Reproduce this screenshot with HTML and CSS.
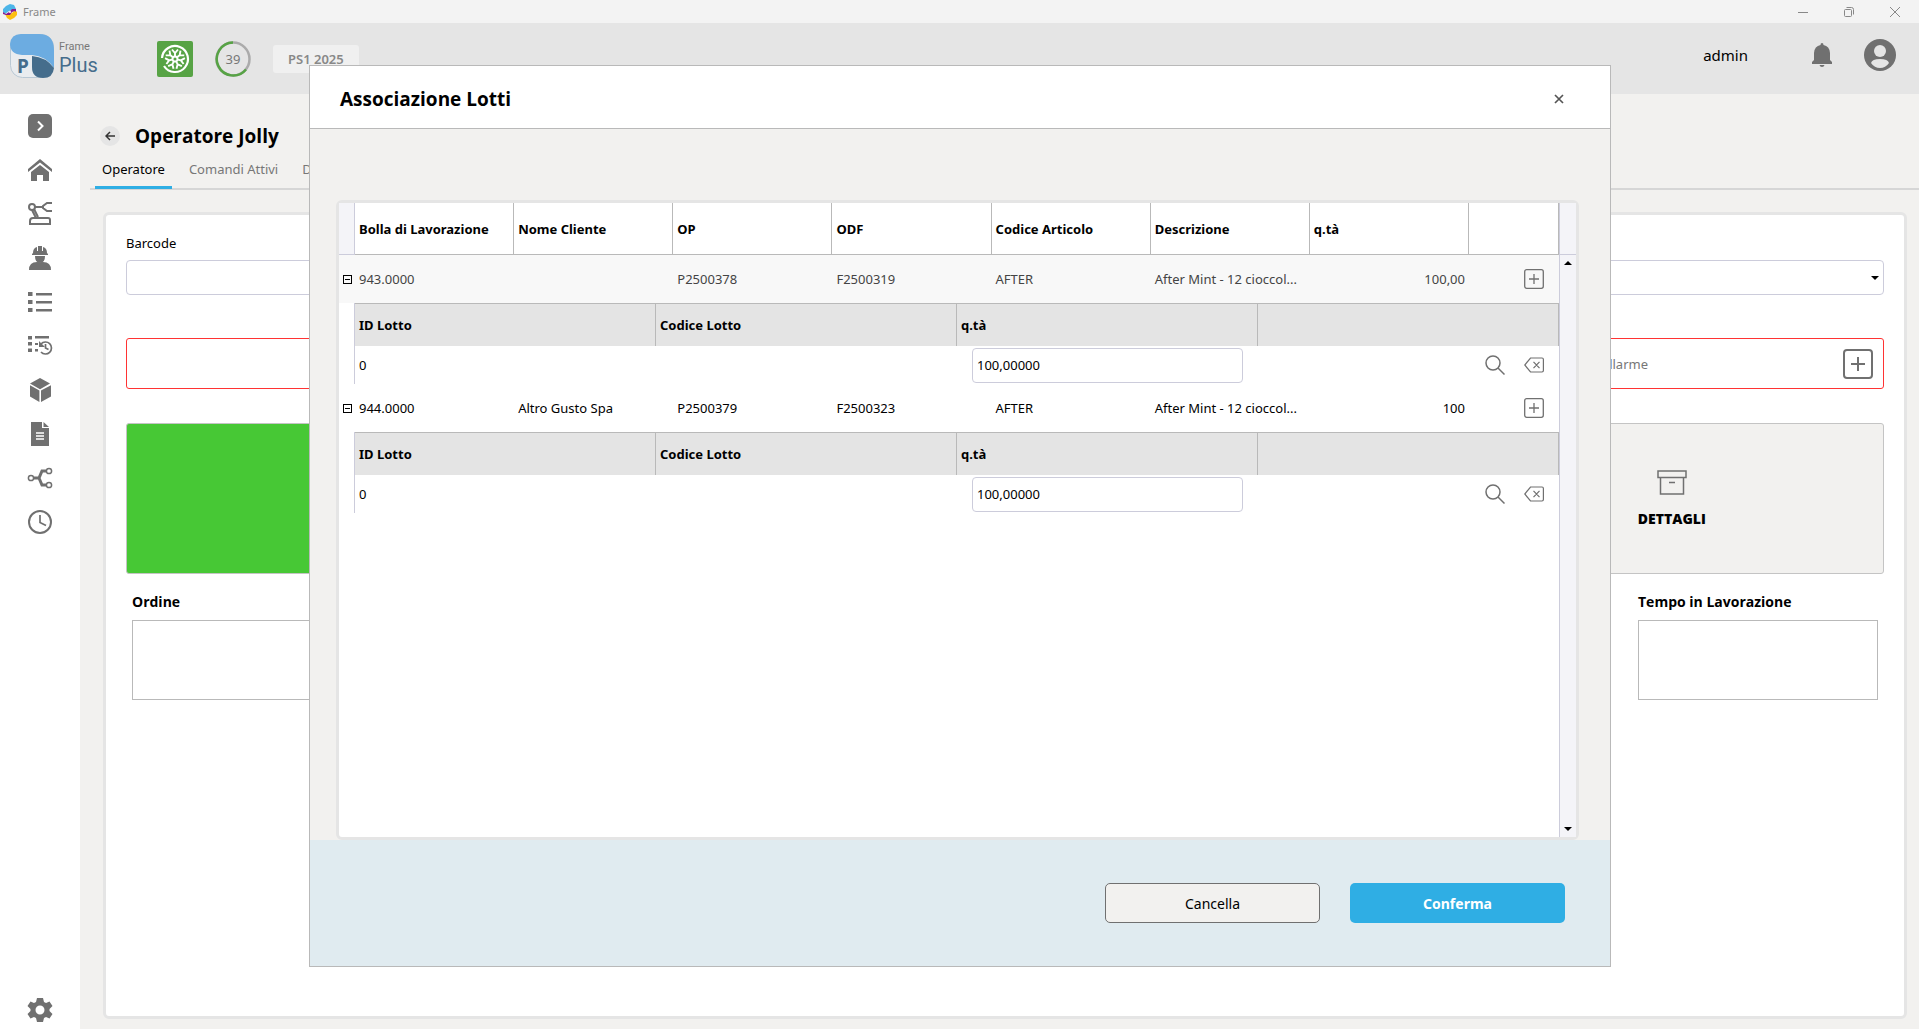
FILE: index.html
```html
<!DOCTYPE html>
<html lang="it">
<head>
    <meta charset="UTF-8">
    <meta name="viewport" content="width=device-width, initial-scale=1.0">
    <title>Frame</title>
    <link rel="stylesheet" href="styles.css">
</head>
<body>
    <div class="titlebar">
        <svg class="app-icon" width="16" height="16" viewBox="0 0 16 16">
            <path fill="#4db5e8" d="M8 0l4 1 2 4-4 1-3 1-4 3-2-2V5l3-3z"/>
            <path fill="#fdc010" d="M15 8v3l-3 3-4 2-3-2-2-4 4 0 3-1 3-3z"/>
            <path fill="#8a1b8e" d="M1 8l3 2 3-2 3-3 4 0v3l-1-1-3 1-2 3-4 0-3-1z"/>
            <circle cx="8" cy="8" r="1" fill="#fff"/>
        </svg>
        <span class="app-name">Frame</span>
        <div class="window-buttons">
            <button aria-label="Riduci"><svg width="12" height="12" viewBox="0 0 12 12"><path d="M1 6.500h10"/></svg></button>
            <button aria-label="Ripristina"><svg width="12" height="12" viewBox="0 0 12 12"><rect x="1.500" y="3.500" width="7" height="7" rx="1"/><path d="M3.500 1.500h5q2 0 2 2v5"/></svg></button>
            <button aria-label="Chiudi finestra"><svg width="12" height="12" viewBox="0 0 12 12"><path d="M1 1l10 10M11 1L1 11"/></svg></button>
        </div>
    </div>

    <header>
        <div class="logo">
            <svg width="44" height="44" viewBox="0 0 44 44">
                <rect x="0.500" y="0.500" width="43" height="43" rx="12" fill="#e9ecef" stroke="#b9c8d4"/>
                <path fill="#6cace1" d="M11 0h18q15 0 15 16v18Q36 22 22 21H12Q0 20 0 10 1 0 11 0z"/>
                <path fill="#456d8c" d="M22 22q14 1 22 12-1 10-11 10-11 0-11-11z"/>
                <text x="7" y="39" class="logo-letter">P</text>
            </svg>
            <div class="logo-text">
                <span class="logo-frame">Frame</span>
                <span class="logo-plus">Plus</span>
            </div>
        </div>
        <svg class="wheel" width="36" height="36" viewBox="0 0 36 36">
            <rect width="36" height="36" rx="2" fill="#57a345"/>
            <g fill="none" stroke="#fff" stroke-width="1.900">
                <path stroke-width="2.200" d="M5 17A13 13 0 1 1 7 25"/>
                <circle cx="18" cy="18" r="2.500"/>
                <g id="raggio"><path d="M18 15V12M15 8.500l3 3.500 3-3.500"/></g>
                <use href="#raggio" transform="rotate(51 18 18)"/>
                <use href="#raggio" transform="rotate(103 18 18)"/>
                <use href="#raggio" transform="rotate(154 18 18)"/>
                <use href="#raggio" transform="rotate(206 18 18)"/>
                <use href="#raggio" transform="rotate(257 18 18)"/>
                <use href="#raggio" transform="rotate(309 18 18)"/>
            </g>
        </svg>
        <svg class="ring" width="36" height="36" viewBox="0 0 36 36">
            <circle cx="18" cy="18" r="16.500" fill="none" stroke="#ababab" stroke-width="2.500"/>
            <path d="M18 1.500A16.500 16.500 0 1 0 31 28.500" fill="none" stroke="#57a345" stroke-width="2.500"/>
            <text x="18" y="23" text-anchor="middle">39</text>
        </svg>
        <span class="station">PS1 2025</span>
        <div class="user">
            <span class="user-name">admin</span>
            <svg width="20" height="24" viewBox="0 0 20 24" fill="#707070"><path d="M10 0q1.500 0 1.500 2 6 1 6.500 8v7l2 2v2H0v-2l2-2v-7q.5-7 6.500-8Q8.500 0 10 0zM7.500 22h5q-.5 2-2.500 2t-2.500-2z"/></svg>
            <svg width="32" height="32" viewBox="0 0 32 32">
                <circle cx="16" cy="16" r="16" fill="#707070"/>
                <circle cx="16" cy="12" r="6" fill="#e5e5e5"/>
                <path d="M7 24q1-4 9-4t9 4q-3.500 5-9 5t-9-5z" fill="#e5e5e5"/>
            </svg>
        </div>
    </header>

    <div class="layout">
        <nav class="sidebar">
            <a href="#" aria-label="Espandi"><svg viewBox="0 0 24 24"><rect width="24" height="24" rx="5"/><path d="M10 7.500l4.500 4.500-4.500 4.500" fill="none" stroke="#fff" stroke-width="2"/></svg></a>
            <a href="#" aria-label="Home"><svg viewBox="0 0 24 24"><path d="M12 1L24 11v3L12 4.500 0 14v-3z"/><path d="M12 7l9 7v9h-6v-6H9v6H3v-9z"/></svg></a>
            <a href="#" aria-label="Macchine"><svg viewBox="0 0 24 24" fill="none" stroke="#707070" stroke-width="2"><circle cx="4" cy="5" r="3"/><path d="M7 5h8M4 8l4 8M6 7l4 8M24 1h-5l-4 3v2l4 3h5M5 16h15q2 0 2 2v4H2v-3q0-3 3-3z"/></svg></a>
            <a href="#" aria-label="Operatori"><svg viewBox="0 0 24 24"><path d="M5 7q0-5 4-6v4h1V0h4v5h1V1q4 1 4 6l1 1v1H4V8zM7 10h10q0 7-5 7t-5-7zM1 24q0-8 8-8 3 2 6 0 8 0 8 8z"/></svg></a>
            <a href="#" aria-label="Elenco"><svg viewBox="0 0 24 24"><path d="M0 2h4.500v4H0zM8 3h16v2.500H8zM0 10h4.500v4H0zM8 11h16v2.500H8zM0 18h4.500v4H0zM8 19h16v2.500H8z"/></svg></a>
            <a href="#" aria-label="Storico"><svg viewBox="0 0 24 24"><path d="M0 2h4v3.500H0zM7 2h14v2.500H7zM0 8h4v3.500H0zM7 9h3v2H7zM0 14.500h4V18H0zM7 15h3v2.500H7zM11 7v6h6z"/><path d="M13 10a6 6 0 1 1 0 8M17.500 10v4l3 1.500" fill="none" stroke="#707070" stroke-width="1.700"/></svg></a>
            <a href="#" aria-label="Articoli"><svg viewBox="0 0 24 24"><path d="M12 0l10 5.500-10 5.800L2 5.500zM2 7.300l9.400 5.300V24L2 18.500zM23 7.300v11.200L13 24V12.600z"/></svg></a>
            <a href="#" aria-label="Documenti"><svg viewBox="0 0 24 24"><path d="M3 0h11v6h7v18H3zM15.500 0L21 5h-5.500z"/><path d="M8 11h8M8 14h8M8 17h8" stroke="#fff" stroke-width="1.500"/></svg></a>
            <a href="#" aria-label="Flussi"><svg viewBox="0 0 24 24" fill="none" stroke="#707070" stroke-width="1.500"><circle cx="3" cy="12" r="2.600"/><circle cx="21" cy="5" r="2.600"/><circle cx="21" cy="19" r="2.600"/><path stroke-width="3" d="M6 12h5l3-7h4M11 12l3 7h4"/></svg></a>
            <a href="#" aria-label="Tempi"><svg viewBox="0 0 24 24" fill="none" stroke="#707070" stroke-width="2"><circle cx="12" cy="12" r="11"/><path d="M12 5v7.500l6 3" stroke-width="1.700"/></svg></a>
            <a href="#" class="settings" aria-label="Impostazioni"><svg viewBox="0 0 24 24"><path fill-rule="evenodd" d="M9 0h6l1 4 2 1 3.500-1.500L24.500 8l-3 3v2l3 3-3 4.500L18 19l-2 1-1 4H9l-1-4-2-1-3.500 1.500L-.5 16l3-3v-2l-3-3 3-4.500L6 5l2-1zM12 7.500a4.500 4.500 0 1 0 0 9 4.500 4.500 0 0 0 0-9z"/></svg></a>
        </nav>

        <main>
            <div class="page-title">
                <button class="back" aria-label="Indietro"><svg width="10" height="10" viewBox="0 0 10 10"><path d="M10 5H1.500M5 1L1 5l4 4" fill="none" stroke="#333" stroke-width="1.500"/></svg></button>
                <h1>Operatore Jolly</h1>
            </div>
            <div class="tabs">
                <a href="#" class="active">Operatore</a>
                <a href="#">Comandi Attivi</a>
                <a href="#">Dettagli</a>
            </div>

            <div class="panel">
                <div class="fields">
                    <div class="field">
                        <label for="barcode">Barcode</label>
                        <input type="text" id="barcode">
                    </div>
                    <div class="field">
                        <label for="fase">Fase</label>
                        <div class="select-box">
                            <select id="fase"><option></option></select>
                        </div>
                    </div>
                </div>

                <div class="alarms">
                    <div class="alarm"></div>
                    <div class="alarm">
                        <span>Allarme</span>
                        <button class="icon-button" aria-label="Aggiungi allarme"><svg width="30" height="30" viewBox="0 0 30 30" fill="none" stroke="#707070" stroke-width="2"><rect x="1" y="1" width="28" height="28" rx="3"/><path d="M15 8v14M8 15h14"/></svg></button>
                    </div>
                </div>

                <div class="actions">
                    <button class="action green" aria-label="Avvia"></button>
                    <button class="action details">
                        <svg width="30" height="25" viewBox="0 0 30 25" fill="none" stroke="#707070" stroke-width="1.500"><path d="M1 1h28v6.500H1zM3.500 7.500h23v16.500h-23zM12 12.500h6"/></svg>
                        DETTAGLI
                    </button>
                </div>

                <div class="info">
                    <div class="info-item">
                        <h2>Ordine</h2>
                        <div class="info-box"></div>
                    </div>
                    <div class="info-item">
                        <h2>Tempo in Lavorazione</h2>
                        <div class="info-box"></div>
                    </div>
                </div>
            </div>
        </main>
    </div>

    <div class="overlay">
        <div class="modal" role="dialog" aria-labelledby="modalTitle">
            <div class="modal-header">
                <h2 id="modalTitle">Associazione Lotti</h2>
                <button class="icon-button" aria-label="Chiudi"><svg width="10" height="10" viewBox="0 0 10 10"><path d="M1 1l8 8M9 1L1 9" stroke="#555" stroke-width="1.700"/></svg></button>
            </div>

            <div class="modal-body">
                <div class="grid">
                    <div class="grid-content">
                        <table class="orders">
                            <colgroup>
                                <col class="col-toggle">
                                <col span="7">
                                <col class="col-add">
                            </colgroup>
                            <thead>
                                <tr>
                                    <th class="gutter"></th>
                                    <th>Bolla di Lavorazione</th>
                                    <th>Nome Cliente</th>
                                    <th>OP</th>
                                    <th>ODF</th>
                                    <th>Codice Articolo</th>
                                    <th>Descrizione</th>
                                    <th>q.tà</th>
                                    <th></th>
                                </tr>
                            </thead>
                            <tbody>
                                <tr class="order selected">
                                    <td class="toggle"><button aria-label="Comprimi"></button></td>
                                    <td>943.0000</td>
                                    <td></td>
                                    <td>P2500378</td>
                                    <td>F2500319</td>
                                    <td>AFTER</td>
                                    <td>After Mint - 12 cioccol...</td>
                                    <td class="number">100,00</td>
                                    <td class="row-icons"><button class="icon-button" aria-label="Aggiungi lotto"><svg width="20" height="20" viewBox="0 0 20 20"><use href="#piu"/></svg></button></td>
                                </tr>
                                <tr>
                                    <td></td>
                                    <td colspan="8" class="nested">
                                        <table class="lots">
                                            <thead>
                                                <tr><th>ID Lotto</th><th>Codice Lotto</th><th>q.tà</th><th></th></tr>
                                            </thead>
                                            <tbody>
                                                <tr>
                                                    <td>0</td>
                                                    <td></td>
                                                    <td class="qty"><input type="text" value="100,00000" aria-label="q.tà lotto 943"></td>
                                                    <td class="row-icons">
                                                        <button class="icon-button" aria-label="Cerca"><svg width="20" height="20" viewBox="0 0 20 20"><use href="#lente"/></svg></button>
                                                        <button class="icon-button" aria-label="Elimina"><svg width="20" height="20" viewBox="0 0 20 20"><use href="#elimina"/></svg></button>
                                                    </td>
                                                </tr>
                                            </tbody>
                                        </table>
                                    </td>
                                </tr>
                                <tr class="order">
                                    <td class="toggle"><button aria-label="Comprimi"></button></td>
                                    <td>944.0000</td>
                                    <td>Altro Gusto Spa</td>
                                    <td>P2500379</td>
                                    <td>F2500323</td>
                                    <td>AFTER</td>
                                    <td>After Mint - 12 cioccol...</td>
                                    <td class="number">100</td>
                                    <td class="row-icons"><button class="icon-button" aria-label="Aggiungi lotto"><svg width="20" height="20" viewBox="0 0 20 20"><use href="#piu"/></svg></button></td>
                                </tr>
                                <tr>
                                    <td></td>
                                    <td colspan="8" class="nested">
                                        <table class="lots">
                                            <thead>
                                                <tr><th>ID Lotto</th><th>Codice Lotto</th><th>q.tà</th><th></th></tr>
                                            </thead>
                                            <tbody>
                                                <tr>
                                                    <td>0</td>
                                                    <td></td>
                                                    <td class="qty"><input type="text" value="100,00000" aria-label="q.tà lotto 944"></td>
                                                    <td class="row-icons">
                                                        <button class="icon-button" aria-label="Cerca"><svg width="20" height="20" viewBox="0 0 20 20"><use href="#lente"/></svg></button>
                                                        <button class="icon-button" aria-label="Elimina"><svg width="20" height="20" viewBox="0 0 20 20"><use href="#elimina"/></svg></button>
                                                    </td>
                                                </tr>
                                            </tbody>
                                        </table>
                                    </td>
                                </tr>
                            </tbody>
                        </table>
                    </div>
                    <div class="scrollbar">
                        <div class="scroll-head"></div>
                        <div class="arrow-up"></div>
                        <div class="arrow-down"></div>
                    </div>
                </div>
            </div>

            <div class="modal-footer">
                <button class="cancel">Cancella</button>
                <button class="confirm">Conferma</button>
            </div>
        </div>
    </div>

    <!-- Icone della griglia -->
    <svg class="icons" width="0" height="0">
        <defs>
            <g id="piu" fill="none" stroke="#707070" stroke-width="1.300"><rect x="0.700" y="0.700" width="18.600" height="18.600" rx="2"/><path d="M10 5v10M5 10h10"/></g>
            <g id="lente" fill="none" stroke="#707070" stroke-width="1.500"><circle cx="8" cy="8" r="7"/><path d="M13 13l6.500 6.500"/></g>
            <g id="elimina" fill="none" stroke="#707070" stroke-width="1.200"><path d="M6.500 3H18q1.400 0 1.400 1.400v11.200q0 1.400-1.400 1.400H6.500L.8 10zM9.500 6.800l6 6.400M15.500 6.800l-6 6.400"/></g>
        </defs>
    </svg>
</body>
</html>
```
FILE: styles.css
```css
* {
    box-sizing: border-box;
}

body {
    display: flex;
    flex-direction: column;
    min-height: 100vh;
    margin: 0;
    font-family: "Noto Sans", "Open Sans", sans-serif;
    font-size: 13px;
    color: #000;
    background-color: #f2f1ef;
}

h1, h2 {
    margin: 0;
    font-family: "Open Sans", "Noto Sans", sans-serif;
    font-weight: 700;
}

button, input, select {
    font-family: inherit;
    font-size: inherit;
    color: inherit;
}

button {
    padding: 0;
    border: none;
    background: none;
    cursor: pointer;
}

a {
    color: inherit;
    text-decoration: none;
}

svg {
    display: block;
}

.icons {
    position: absolute;
}

/* Barra della finestra */
.titlebar {
    display: flex;
    align-items: center;
    height: 23px;
    padding: 0 18px 0 2px;
    background-color: #f3f3f3;
}

.app-name {
    margin-left: 5px;
    font-size: 11px;
    color: #888;
}

.window-buttons {
    display: flex;
    gap: 34px;
    margin-left: auto;
}

.window-buttons svg {
    fill: none;
    stroke: #888;
}

/* Testata */
header {
    display: flex;
    align-items: center;
    height: 71px;
    padding: 0 23px 0 10px;
    background-color: #e5e5e5;
}

.logo {
    display: flex;
    gap: 5px;
    width: 147px;
    margin-bottom: 6px;
}

.logo-letter {
    font-size: 19px;
    font-weight: 700;
    fill: #456d8c;
}

.logo-text {
    display: flex;
    flex-direction: column;
    padding-top: 6px;
    font-family: Roboto, sans-serif;
}

.logo-frame {
    font-size: 11px;
    line-height: 14px;
    color: #777;
}

.logo-plus {
    font-size: 20px;
    line-height: 22px;
    color: #456d8c;
}

.ring {
    margin: 0 22px;
}

.ring text {
    font-size: 13px;
    fill: #777;
}

.station {
    padding: 0 15px;
    border-radius: 3px;
    font-weight: 600;
    line-height: 28px;
    color: #888;
    background-color: #f0f0f0;
}

.user {
    display: flex;
    align-items: center;
    margin: 0 0 8px auto;
}

.user-name {
    margin-right: 64px;
    font-size: 15px;
}

.user svg:last-child {
    margin-left: 32px;
}

/* Menu laterale */
.layout {
    display: flex;
    flex: 1;
}

.sidebar {
    display: flex;
    flex-direction: column;
    align-items: center;
    gap: 20px;
    width: 80px;
    padding: 20px 0 7px;
    background-color: #fff;
}

.sidebar svg {
    width: 24px;
    height: 24px;
    overflow: visible;
}

.sidebar svg:not([fill]) {
    fill: #707070;
}

.settings {
    margin-top: auto;
}

main {
    display: flex;
    flex: 1;
    flex-direction: column;
    padding: 28px 0 10px;
}

.page-title {
    display: flex;
    align-items: center;
    gap: 15px;
    height: 28px;
    padding-left: 20px;
}

.page-title h1 {
    font-size: 19px;
}

.back {
    display: flex;
    align-items: center;
    justify-content: center;
    width: 20px;
    height: 20px;
    border-radius: 50%;
    background-color: #e5e5e5;
}

.tabs {
    display: flex;
    gap: 10px;
    height: 40px;
    margin-left: 10px;
    padding-left: 5px;
    border-bottom: 2px solid #d6d6d6;
}

.tabs a {
    height: 39px;
    padding: 0 7px;
    line-height: 39px;
    color: #777;
}

.tabs .active {
    color: #000;
    border-bottom: 3px solid #2faee4;
}

.panel {
    flex: 1;
    margin: 22px 12px 0 23px;
    padding: 18px 20px;
    border: 3px solid #e5e5e5;
    border-radius: 6px;
    background-color: #fff;
}

.fields {
    display: grid;
    grid-template-columns: 1fr 1fr;
    gap: 20px;
}

.field label {
    display: block;
    margin-bottom: 7px;
    line-height: 20px;
}

.field input,
.field select {
    display: block;
    width: 100%;
    height: 35px;
    border: 1px solid #ccccdb;
    border-radius: 4px;
    background-color: #fff;
    appearance: none;
}

.select-box {
    position: relative;
}

.select-box::after {
    content: "";
    position: absolute;
    right: 5px;
    top: 16px;
    border: 4px solid transparent;
    border-top-color: #000;
    border-bottom: none;
}

.alarms,
.actions {
    display: grid;
    grid-template-columns: repeat(4, 1fr);
    gap: 20px;
}

.alarms {
    margin: 43px 0 34px;
}

.alarm {
    display: flex;
    align-items: center;
    justify-content: flex-end;
    gap: 195px;
    height: 51px;
    padding-right: 10px;
    border: 1px solid #f33;
    border-radius: 3px;
    color: #777;
}

.alarm:last-child,
.details {
    grid-column: 4;
}

.action {
    display: flex;
    flex-direction: column;
    align-items: center;
    justify-content: center;
    gap: 14px;
    height: 151px;
    border: 1px solid #c4c4c4;
    border-radius: 3px;
    font-family: "Open Sans", "Noto Sans", sans-serif;
    font-size: 14px;
    font-weight: 800;
    background-color: #f2f1ef;
}

.green {
    background-color: #47c835;
}

.info {
    display: flex;
    justify-content: space-between;
    padding: 18px 6px;
}

.info-item {
    width: 240px;
}

.info h2 {
    margin-bottom: 8px;
    font-size: 14px;
    line-height: 20px;
}

.info-box {
    height: 80px;
    border: 1px solid #b9b9b9;
}

/* Finestra di associazione lotti */
.overlay {
    position: fixed;
    inset: 0;
    display: flex;
    padding: 65px 308px 62px 309px;
}

.modal {
    display: flex;
    flex: 1;
    flex-direction: column;
    min-width: 0;
    border: 1px solid #b9b9b9;
    background-color: #f2f1ef;
}

.modal-header {
    display: flex;
    align-items: center;
    justify-content: space-between;
    height: 63px;
    padding: 3px 46px 0 30px;
    border-bottom: 1px solid #b9b9b9;
    background-color: #fff;
}

.modal-header h2 {
    font-size: 19px;
}

.modal-body {
    display: flex;
    flex: 1;
    padding: 71px 31px 0 26px;
}

.grid {
    display: flex;
    flex: 1;
    border: 3px solid #e5e5e5;
    border-radius: 6px;
    background-color: #fff;
}

.grid-content {
    flex: 1;
}

table {
    width: 100%;
    border-collapse: separate;
    border-spacing: 0;
    table-layout: fixed;
}

th, td {
    padding: 0 4px;
    text-align: left;
    white-space: nowrap;
}

.col-toggle {
    width: 16px;
}

.col-add {
    width: 90px;
}

.orders th {
    height: 52px;
    border-right: 1px solid #b9b9b9;
    border-bottom: 1px solid #b9b9b9;
}

.orders .gutter {
    border-color: #ccccdb;
    background-color: #f4f4f8;
}

.order td {
    height: 48px;
}

.selected {
    color: #444;
    background-color: #f8f8f8;
}

.orders .toggle {
    padding: 0 0 0 4px;
}

.toggle button {
    display: block;
    width: 9px;
    height: 9px;
    border: 1px solid #000;
    background: linear-gradient(#000, #000) center / 5px 1px no-repeat;
}

.orders .number {
    text-align: right;
}

.orders .nested {
    padding: 0;
}

.lots {
    width: calc(100% + 1px);
    margin-left: -1px;
    border-left: 1px solid #ccccdb;
}

.lots th {
    height: 43px;
    border-top: 1px solid #b9b9b9;
    border-bottom: none;
    background-color: #e4e4e4;
}

.lots td {
    height: 38px;
}

.lots .qty {
    padding: 0 15px;
}

.qty input {
    display: block;
    width: 100%;
    height: 35px;
    padding: 0 4px;
    border: 1px solid #ccccdb;
    border-radius: 4px;
}

.orders .row-icons {
    padding-right: 15px;
    text-align: right;
}

.row-icons .icon-button {
    display: inline-block;
    margin-left: 16px;
    vertical-align: middle;
}

.scrollbar {
    display: flex;
    flex-direction: column;
    align-items: center;
    width: 17px;
    border-left: 1px solid #ccccdb;
    background-color: #f4f4f8;
}

.scroll-head {
    align-self: stretch;
    height: 52px;
    border-bottom: 1px solid #ccccdb;
}

.arrow-up,
.arrow-down {
    border: 4px solid transparent;
}

.arrow-up {
    margin-top: 6px;
    border-top: none;
    border-bottom-color: #000;
}

.arrow-down {
    margin: auto 0 6px;
    border-bottom: none;
    border-top-color: #000;
}

.modal-footer {
    display: flex;
    align-items: center;
    justify-content: flex-end;
    gap: 30px;
    height: 126px;
    padding-right: 45px;
    background-color: #e0ebf0;
}

.modal-footer button {
    width: 215px;
    height: 40px;
    border-radius: 5px;
    font-size: 14px;
}

.modal-footer .cancel {
    border: 1px solid #707070;
    background-color: #f2f1ef;
}

.modal-footer .confirm {
    font-weight: 700;
    color: #fff;
    background-color: #2faee4;
}
```
